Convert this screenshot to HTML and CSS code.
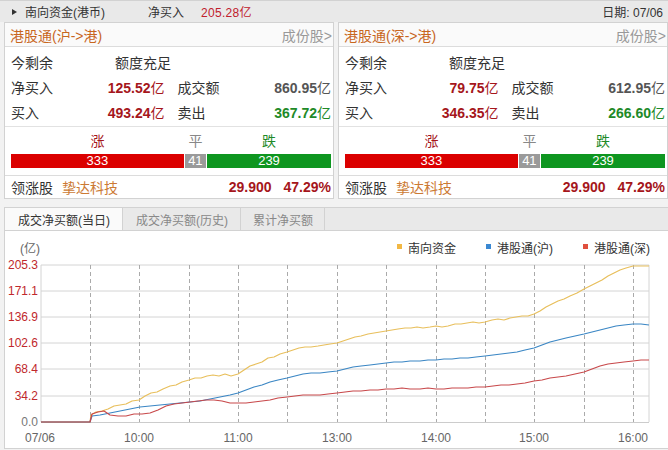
FILE: index.html
```html
<!DOCTYPE html>
<html lang="zh">
<head>
    <meta charset="UTF-8">
    <meta name="viewport" content="width=device-width, initial-scale=1.0">
    <title>南向资金</title>
    <link rel="stylesheet" href="styles.css">
</head>
<body>
    <div class="topbar">
        <span class="tri"></span>
        <span class="topbar-title">南向资金(港币)</span>
        <span class="topbar-label">净买入</span>
        <span class="topbar-value">205.28亿</span>
        <span class="topbar-date">日期: 07/06</span>
    </div>

    <div class="panels">
        <section class="panel">
            <div class="panel-head">
                <span class="panel-title">港股通(沪->港)</span>
                <span class="panel-more">成份股&gt;</span>
            </div>
            <div class="panel-rows">
                <div class="row"><span>今剩余</span><span class="quota">额度充足</span></div>
                <div class="row pair">
                    <div class="cell"><span>净买入</span><b class="up">125.52<i>亿</i></b></div>
                    <div class="cell"><span>成交额</span><b class="flat">860.95<i>亿</i></b></div>
                </div>
                <div class="row pair">
                    <div class="cell"><span>买入</span><b class="up">493.24<i>亿</i></b></div>
                    <div class="cell"><span>卖出</span><b class="down">367.72<i>亿</i></b></div>
                </div>
            </div>
            <div class="updown">
                <div class="updown-labels">
                    <span class="lbl-up" style="flex-grow: 333">涨</span>
                    <span class="lbl-flat" style="flex-grow: 41">平</span>
                    <span class="lbl-down" style="flex-grow: 239">跌</span>
                </div>
                <div class="updown-bar">
                    <span class="seg-up" style="flex-grow: 333">333</span>
                    <span class="seg-flat" style="flex-grow: 41">41</span>
                    <span class="seg-down" style="flex-grow: 239">239</span>
                </div>
            </div>
            <div class="leader">
                <span>领涨股</span>
                <span class="leader-name">挚达科技</span>
                <b class="leader-price">29.900</b>
                <b class="leader-pct">47.29%</b>
            </div>
        </section>

        <section class="panel">
            <div class="panel-head">
                <span class="panel-title">港股通(深->港)</span>
                <span class="panel-more">成份股&gt;</span>
            </div>
            <div class="panel-rows">
                <div class="row"><span>今剩余</span><span class="quota">额度充足</span></div>
                <div class="row pair">
                    <div class="cell"><span>净买入</span><b class="up">79.75<i>亿</i></b></div>
                    <div class="cell"><span>成交额</span><b class="flat">612.95<i>亿</i></b></div>
                </div>
                <div class="row pair">
                    <div class="cell"><span>买入</span><b class="up">346.35<i>亿</i></b></div>
                    <div class="cell"><span>卖出</span><b class="down">266.60<i>亿</i></b></div>
                </div>
            </div>
            <div class="updown">
                <div class="updown-labels">
                    <span class="lbl-up" style="flex-grow: 333">涨</span>
                    <span class="lbl-flat" style="flex-grow: 41">平</span>
                    <span class="lbl-down" style="flex-grow: 239">跌</span>
                </div>
                <div class="updown-bar">
                    <span class="seg-up" style="flex-grow: 333">333</span>
                    <span class="seg-flat" style="flex-grow: 41">41</span>
                    <span class="seg-down" style="flex-grow: 239">239</span>
                </div>
            </div>
            <div class="leader">
                <span>领涨股</span>
                <span class="leader-name">挚达科技</span>
                <b class="leader-price">29.900</b>
                <b class="leader-pct">47.29%</b>
            </div>
        </section>
    </div>

    <div class="tabs">
        <span class="tab active">成交净买额(当日)</span>
        <span class="tab">成交净买额(历史)</span>
        <span class="tab">累计净买额</span>
    </div>

    <div class="chart">
        <!-- viewBox uses page coordinates, origin at the chart's inner corner -->
        <svg width="662" height="217" viewBox="5 231 662 217">
            <text class="unit" x="20" y="253">(亿)</text>

            <g class="legend">
                <rect x="397" y="244" width="5" height="5" fill="#f2b844"/>
                <text x="408" y="253">南向资金</text>
                <rect x="486" y="244" width="5" height="5" fill="#3a88d2"/>
                <text x="497" y="253">港股通(沪)</text>
                <rect x="583" y="244" width="5" height="5" fill="#e0503e"/>
                <text x="594" y="253">港股通(深)</text>
            </g>

            <g class="grid">
                <line x1="41" y1="265" x2="649" y2="265"/>
                <line x1="41" y1="291" x2="649" y2="291"/>
                <line x1="41" y1="317" x2="649" y2="317"/>
                <line x1="41" y1="343" x2="649" y2="343"/>
                <line x1="41" y1="369" x2="649" y2="369"/>
                <line x1="41" y1="396" x2="649" y2="396"/>
                <line x1="41" y1="265" x2="41" y2="422"/>
                <line x1="649" y1="265" x2="649" y2="422"/>
            </g>

            <g class="vgrid">
                <line x1="90.5" y1="265" x2="90.5" y2="422"/>
                <line x1="139.5" y1="265" x2="139.5" y2="422"/>
                <line x1="189.5" y1="265" x2="189.5" y2="422"/>
                <line x1="238.5" y1="265" x2="238.5" y2="422"/>
                <line x1="287.5" y1="265" x2="287.5" y2="422"/>
                <line x1="337.5" y1="265" x2="337.5" y2="422"/>
                <line x1="386.5" y1="265" x2="386.5" y2="422"/>
                <line x1="436.5" y1="265" x2="436.5" y2="422"/>
                <line x1="485.5" y1="265" x2="485.5" y2="422"/>
                <line x1="534.5" y1="265" x2="534.5" y2="422"/>
                <line x1="584.5" y1="265" x2="584.5" y2="422"/>
                <line x1="633.5" y1="265" x2="633.5" y2="422"/>
            </g>

            <line class="axis" x1="41" y1="422.5" x2="649" y2="422.5"/>

            <g class="ylabels">
                <text x="38" y="269">205.3</text>
                <text x="38" y="295">171.1</text>
                <text x="38" y="321">136.9</text>
                <text x="38" y="347">102.6</text>
                <text x="38" y="373">68.4</text>
                <text x="38" y="400">34.2</text>
                <text class="zero" x="38" y="426">0.0</text>
            </g>

            <g class="xlabels">
                <text x="40" y="442">07/06</text>
                <text x="139" y="442">10:00</text>
                <text x="238" y="442">11:00</text>
                <text x="337" y="442">13:00</text>
                <text x="436" y="442">14:00</text>
                <text x="534" y="442">15:00</text>
                <text x="633" y="442">16:00</text>
            </g>

            <!-- 南向资金 -->
            <polyline class="line-total" points="41,422 90,422 91,415 96,412 102,411 108,409 114,406 120,405 126,404 132,401 139,400 145,396 151,393 157,392 163,389 170,386 176,385 182,382 189,380 195,378 201,378 207,376 213,375 219,376 225,374 231,376 238,374 244,370 250,366 256,364 262,362 268,358 274,357 280,354 287,352 293,350 299,348 305,347 311,347 318,346 324,345 330,344 337,343 343,341 349,339 355,337 361,336 368,334 374,333 380,332 386,331 392,330 398,329 405,328 411,328 417,327 423,328 430,327 436,326 442,327 448,326 455,324 461,324 467,323 473,322 479,323 485,322 492,320 498,319 504,320 510,318 516,317 522,316 528,316 534,314 540,311 546,307 552,304 558,301 564,299 570,296 577,293 584,289 590,286 596,283 602,280 608,276 614,273 620,270 626,268 633,266 640,266 649,266"/>
            <!-- 港股通(沪) -->
            <polyline class="line-sh" points="41,422 90,422 92,416 100,415 110,413 120,411 130,409 140,407 150,406 160,405 170,404 180,403 190,402 200,401 210,399 220,397 230,395 238,393 246,390 254,387 262,385 270,382 278,380 287,378 295,376 303,374 311,373 320,373 328,372 337,371 345,369 353,367 361,366 370,365 378,364 386,363 394,362 402,362 410,361 420,361 428,360 436,360 444,359 452,359 460,358 468,358 476,357 485,356 493,355 501,354 509,353 517,352 525,350 534,348 542,345 550,342 558,340 566,338 575,336 584,334 592,332 600,330 608,328 616,326 624,325 633,324 641,324 649,325"/>
            <!-- 港股通(深) -->
            <polyline class="line-sz" points="41,422 90,422 92,414 98,412 104,411 110,415 118,416 126,416 134,414 142,414 150,413 158,410 166,406 174,404 182,403 190,402 198,401 206,400 214,400 222,401 230,403 238,403 246,403 254,402 262,401 270,400 278,398 287,397 295,396 303,395 311,395 320,395 328,394 337,393 345,392 353,391 361,391 370,390 378,390 386,389 394,389 402,388 410,389 420,389 428,388 436,389 444,389 452,388 460,388 468,388 476,387 485,387 493,386 501,385 509,385 517,384 525,383 534,381 542,380 550,378 558,377 566,376 575,374 584,372 592,369 600,366 608,364 616,363 624,362 633,361 641,360 649,360"/>
        </svg>
    </div>
</body>
</html>
```

FILE: styles.css
```css
body {
    margin: 0;
    width: 668px;
    background-color: #f2f2f2;
    font-family: 'Liberation Sans', 'Noto Sans CJK SC', sans-serif;
    color: #333;
}
.topbar {
    display: flex;
    align-items: center;
    height: 21px;
    border-top: 1px solid #d2d2d2;
    background-color: #e9e9e9;
    font-size: 12px;
}
.tri {
    width: 0;
    height: 0;
    margin-left: 12px;
    border-left: 5px solid #333;
    border-top: 3px solid transparent;
    border-bottom: 3px solid transparent;
}
.topbar-title {
    margin-left: 8px;
}
.topbar-label {
    margin-left: 43px;
}
.topbar-value {
    margin-left: 17px;
    color: #c0202c;
    letter-spacing: 0.3px;
}
.topbar-date {
    margin-left: auto;
    margin-right: 5px;
}
.panels {
    display: flex;
    gap: 4px;
    padding-left: 4px;
}
.panel {
    flex: 1;
    border: 1px solid #d2d2d2;
    background-color: #fff;
}
.panel-head {
    display: flex;
    justify-content: space-between;
    align-items: center;
    height: 23px;
    padding: 0 1px 0 5px;
    border-bottom: 1px solid #dcdcdc;
    background-color: #fafafa;
    font-size: 14px;
}
.panel-title {
    color: #c8661e;
}
.panel-more {
    color: #999;
}
.panel-rows {
    padding: 2px 2px 2px 6px;
    border-bottom: 1px solid #e2e2e2;
}
.row {
    display: flex;
    align-items: center;
    height: 25px;
    font-size: 14px;
}
.quota {
    margin-left: 62px;
}
.pair {
    display: grid;
    grid-template-columns: 1fr 1fr;
    gap: 13px;
}
.cell {
    display: flex;
    justify-content: space-between;
    align-items: center;
}
.cell b {
    font-size: 14px;
}
.cell i {
    font-style: normal;
    font-weight: normal;
}
.up {
    color: #a5161b;
}
.flat {
    color: #555;
}
.down {
    color: #1e8a28;
}
.updown {
    padding: 0 2px 7px 6px;
    border-bottom: 1px solid #dcdcdc;
}
.updown-labels {
    display: flex;
    gap: 1px;
    height: 25px;
    align-items: center;
    font-size: 14px;
}
.updown-labels span {
    flex-basis: 0;
    text-align: center;
}
.lbl-up {
    color: #a5161b;
}
.lbl-flat {
    color: #888;
}
.lbl-down {
    color: #1e8a28;
}
.updown-bar {
    display: flex;
    gap: 1px;
    height: 14px;
    margin-top: 2px;
    font-size: 13px;
    line-height: 14px;
    color: #fff;
}
.updown-bar span {
    flex-basis: 0;
    text-align: center;
}
.seg-up {
    background-color: #db0000;
}
.seg-flat {
    background-color: #9a9a9a;
}
.seg-down {
    background-color: #0e9620;
}
.leader {
    display: flex;
    align-items: center;
    height: 22px;
    padding: 0 2px 0 6px;
    font-size: 14px;
}
.leader-name {
    margin-left: 9px;
    color: #cc7a34;
}
.leader-price {
    margin-left: auto;
    color: #a5161b;
}
.leader-pct {
    margin-left: 12px;
    color: #a5161b;
}
.tabs {
    display: flex;
    height: 22px;
    margin: 8px 0 0 4px;
    border-top: 1px solid #d2d2d2;
    border-bottom: 1px solid #d2d2d2;
    background-color: #e9e9e9;
    font-size: 12px;
}
.tab {
    display: flex;
    align-items: center;
    padding: 0 12px 0 13px;
    border-left: 1px solid #d2d2d2;
    color: #888;
}
.tab:last-child {
    border-right: 1px solid #d2d2d2;
    padding: 0 11px 0 12px;
}
.tab.active {
    background-color: #fafafa;
    color: #333;
}
.chart {
    margin-left: 4px;
    border-left: 1px solid #d2d2d2;
    border-bottom: 1px solid #d2d2d2;
    background-color: #fff;
    height: 217px;
}
.chart svg {
    display: block;
    font-family: 'Liberation Sans', 'Noto Sans CJK SC', sans-serif;
}
.unit {
    font-size: 12px;
    fill: #666;
}
.legend text {
    font-size: 12px;
    fill: #333;
}
.grid line {
    stroke: #d4d4d4;
    stroke-width: 1;
}
.vgrid line {
    stroke: #aaa;
    stroke-width: 1;
    stroke-dasharray: 4 3;
}
.axis {
    stroke: #ccc;
    stroke-width: 1;
}
.ylabels text {
    font-size: 12px;
    fill: #c0282c;
    text-anchor: end;
}
.ylabels .zero {
    fill: #777;
}
.xlabels text {
    font-size: 12px;
    fill: #666;
    text-anchor: middle;
}
.line-total, .line-sh, .line-sz {
    fill: none;
    stroke-width: 1.2;
    stroke-linejoin: round;
}
.line-total {
    stroke: #e8bf5c;
}
.line-sh {
    stroke: #3a86c4;
}
.line-sz {
    stroke: #c8484a;
}
```
